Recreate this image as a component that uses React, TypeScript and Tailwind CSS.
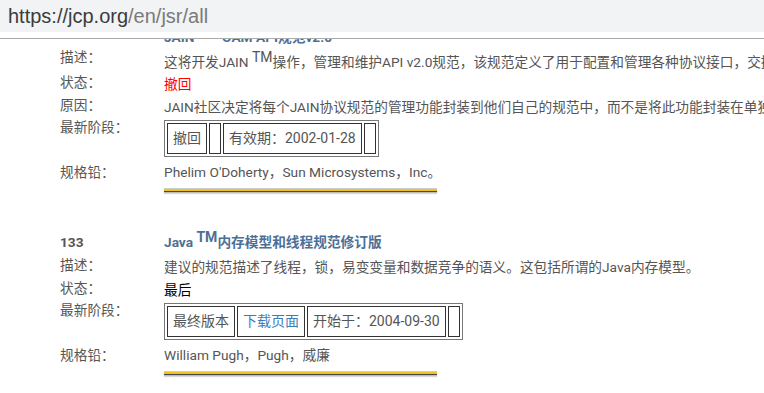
import React from 'react';

// ============================================
// JSR LIST (scrolled view of jcp.org/en/jsr/all)
// ============================================

interface RowProps {
  label?: React.ReactNode;
  height: string;
  labelClass?: string;
  valueClass?: string;
  children?: React.ReactNode;
}

function Row({ label, height, labelClass = 'pt-[1px]', valueClass = 'pt-[3px]', children }: RowProps) {
  return (
    <div className={`flex ${height}`}>
      <div className={`w-[104px] shrink-0 text-[#555] ${labelClass}`}>{label}</div>
      <div className={`whitespace-nowrap ${valueClass}`}>{children}</div>
    </div>
  );
}

function Tm() {
  return <sup className="text-[14px] top-[-0.35em]">TM</sup>;
}

interface StageCell {
  text?: string;
  link?: boolean;
}

function StageTable({ cells }: { cells: StageCell[] }) {
  return (
    <table className="border-separate border-spacing-[2px] border border-[#777] text-[14px] leading-[17px]">
      <tbody>
        <tr>
          {cells.map((c, i) => (
            <td
              key={i}
              className={`border border-[#333] px-[5px] py-[6px] h-[31px] ${c.link ? 'text-[#3f7bb6]' : 'text-[#555]'}`}
            >
              {c.text}
            </td>
          ))}
        </tr>
      </tbody>
    </table>
  );
}

function GoldRule({ className }: { className: string }) {
  return (
    <div className={`w-[273px] border-t border-t-[#cfcfcf] border-b border-b-[#bdbdbd] shadow-[0_1px_1px_rgba(0,0,0,0.15)] ${className}`}>
      <div className="h-[2px] bg-[#f2c31c]" />
      <div className="h-px bg-[#444]" />
    </div>
  );
}

export default function App() {
  return (
    <div className="w-[764px] h-[393px] overflow-hidden bg-white font-['Roboto','Noto_Sans_CJK_SC',sans-serif]">
      {/* address bar */}
      <div className="h-[32px] bg-[#f1f3f4] pl-[8px] text-[20px] leading-[32px] whitespace-nowrap font-['Liberation_Sans',sans-serif]">
        <span className="text-[#3c3c3c]">https://jcp.org</span>
        <span className="text-[#7a7a7a]">/en/jsr/all</span>
      </div>
      <div className="h-[6px] bg-white" />
      <div className="h-px bg-[#ababab]" />

      <div className="h-[354px] overflow-hidden pl-[60px] text-[13.7px] leading-[18px]">
        {/* JSR 132 (scrolled past the top) */}
        <div className="-mt-[12px]">
          <Row height="h-[20px]" valueClass="pt-[1px] font-bold text-[#4d6f96]">
            JAIN <Tm /> OAM API规范v2.0
          </Row>
          <Row label="描述：" height="h-[25px]" valueClass="pt-[6px] text-[#555]">
            这将开发JAIN <Tm />操作，管理和维护API v2.0规范，该规范定义了用于配置和管理各种协议接口，交换机和其他网络设备的接口。
          </Row>
          <Row label="状态：" height="h-[23px]" valueClass="pt-[3px] text-[#ff0000]">
            撤回
          </Row>
          <Row label="原因：" height="h-[22px]" valueClass="pt-[3px] text-[#555]">
            JAIN社区决定将每个JAIN协议规范的管理功能封装到他们自己的规范中，而不是将此功能封装在单独的规范中。
          </Row>
          <Row label="最新阶段：" height="h-[45px]" valueClass="pt-[3px]">
            <StageTable cells={[{ text: '撤回' }, {}, { text: '有效期：2002-01-28' }, {}]} />
          </Row>
          <Row label="规格铅：" height="h-[22px]" valueClass="pt-[1px] text-[#555]">
            Phelim O'Doherty，Sun Microsystems，Inc。
          </Row>
          <div className="pl-[104px]">
            <GoldRule className="mt-[4px]" />
          </div>
        </div>

        {/* JSR 133 */}
        <div className="mt-[39px]">
          <Row
            label={<span className="font-bold">133</span>}
            height="h-[23px]"
            valueClass="pt-[1px] font-bold text-[#4d6f96]"
          >
            Java <Tm />内存模型和线程规范修订版
          </Row>
          <Row label="描述：" height="h-[23px]" valueClass="pt-[3px] text-[#555]">
            建议的规范描述了线程，锁，易变变量和数据竞争的语义。这包括所谓的Java内存模型。
          </Row>
          <Row label="状态：" height="h-[22px]" valueClass="pt-[3px] text-black">
            最后
          </Row>
          <Row label="最新阶段：" height="h-[45px]" valueClass="pt-[3px]">
            <StageTable
              cells={[{ text: '最终版本' }, { text: '下载页面', link: true }, { text: '开始于：2004-09-30' }, {}]}
            />
          </Row>
          <Row label="规格铅：" height="h-[22px]" valueClass="pt-[1px] text-[#555]">
            William Pugh，Pugh，威廉
          </Row>
          <div className="pl-[104px]">
            <GoldRule className="mt-[4px]" />
          </div>
        </div>
      </div>
    </div>
  );
}
